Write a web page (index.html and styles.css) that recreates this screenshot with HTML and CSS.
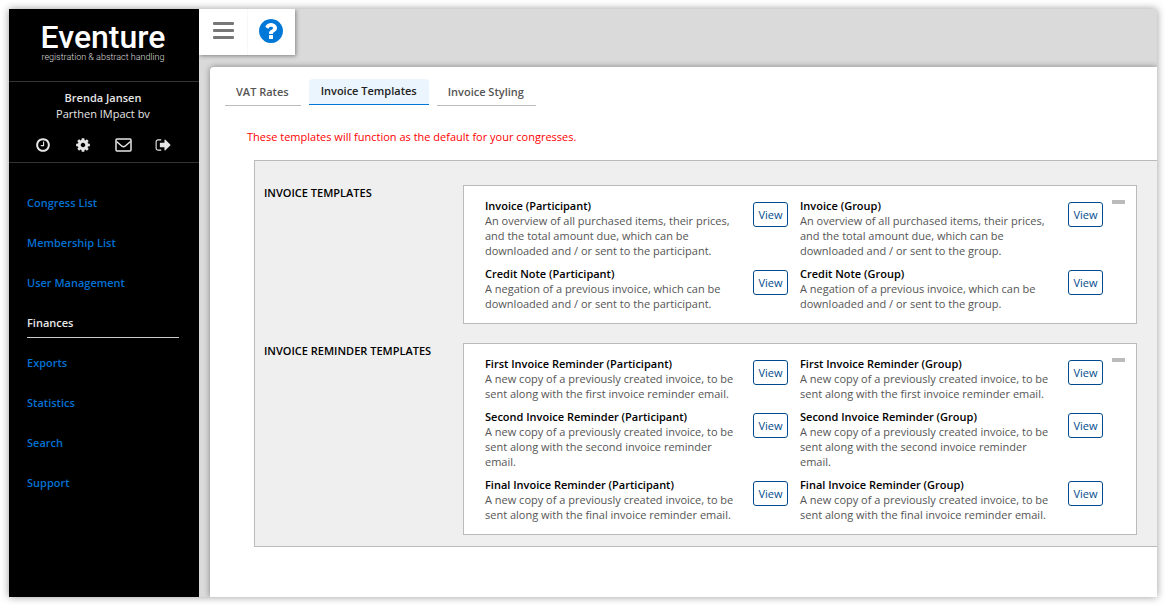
FILE: index.html
```
<!DOCTYPE html>
<html lang="en">

<head>
    <meta charset="UTF-8">
    <meta name="viewport" content="width=device-width, initial-scale=1.0">
    <title>Eventure - Invoice Templates</title>
    <link rel="stylesheet" href="styles.css">
</head>

<body>
    <div id="app">
        <aside id="sidebar">
            <div class="logo">
                <div class="logo-name">Eventure</div>
                <div class="logo-sub">registration &amp; abstract handling</div>
            </div>

            <div class="user">
                <div class="user-name">Brenda Jansen</div>
                <div>Parthen IMpact bv</div>
                <div class="user-icons">
                    <a href="#" aria-label="History">
                        <svg width="16" height="16" viewBox="0 0 1792 1792"><path d="M1024 544v448q0 14-9 23t-23 9h-320q-14 0-23-9t-9-23v-64q0-14 9-23t23-9h224v-352q0-14 9-23t23-9h64q14 0 23 9t9 23zm416 352q0-148-73-273t-198-198-273-73-273 73-198 198-73 273 73 273 198 198 273 73 273-73 198-198 73-273zm224 0q0 209-103 385.5t-279.5 279.5-385.5 103-385.5-103-279.5-279.5-103-385.5 103-385.5 279.5-279.5 385.5-103 385.5 103 279.5 279.5 103 385.5z"/></svg>
                    </a>
                    <a href="#" aria-label="Settings">
                        <svg width="16" height="16" viewBox="0 0 1792 1792"><path d="M1152 896q0-106-75-181t-181-75-181 75-75 181 75 181 181 75 181-75 75-181zm512-109v222q0 12-8 23t-20 13l-185 28q-19 54-39 91 35 50 107 138 10 12 10 25t-9 23q-27 37-99 108t-94 71q-12 0-26-9l-138-108q-44 23-91 38-16 136-29 186-7 28-36 28h-222q-14 0-24.5-8.5t-11.5-21.5l-28-184q-49-16-90-37l-141 107q-10 9-25 9-14 0-25-11-126-114-165-168-7-10-7-23 0-12 8-23 15-21 51-66.5t54-70.5q-27-50-41-99l-183-27q-13-2-21-12.5t-8-23.5v-222q0-12 8-23t19-13l186-28q14-46 39-92-40-57-107-138-10-12-10-24 0-10 9-23 26-36 98.5-107.5t94.5-71.5q13 0 26 10l138 107q44-23 91-38 16-136 29-186 7-28 36-28h222q14 0 24.5 8.5t11.5 21.5l28 184q49 16 90 37l142-107q9-9 24-9 13 0 25 10 129 119 165 170 7 8 7 22 0 12-8 23-15 21-51 66.5t-54 70.5q26 50 41 98l183 28q13 2 21 12.5t8 23.5z"/></svg>
                    </a>
                    <a href="#" aria-label="Messages">
                        <svg class="line" width="17" height="14" viewBox="0 0 17 14"><rect x="1" y="1" width="15" height="12" rx="1"/><path d="M1.5 3.5L7 8.2Q8.5 9.4 10 8.2L15.500 3.500"/></svg>
                    </a>
                    <a href="#" aria-label="Log out">
                        <svg width="16" height="16" viewBox="0 0 1792 1792"><path d="M704 1440q0 4 1 20t.5 26.5-3 23.5-10 19.5-20.5 6.500h-320q-119 0-203.500-84.500t-84.500-203.500v-704q0-119 84.500-203.500t203.500-84.500h320q13 0 22.500 9.500t9.500 22.500q0 4 1 20t.5 26.500-3 23.500-10 19.500-20.500 6.500h-320q-66 0-113 47t-47 113v704q0 66 47 113t113 47h312l11.500 1 11.500 3 8 5.500 7 9 2 13.500zm1024-544q0 26-19 45l-544 544q-19 19-45 19t-45-19-19-45v-288h-448q-26 0-45-19t-19-45v-384q0-26 19-45t45-19h448v-288q0-26 19-45t45-19 45 19l544 544q19 19 19 45z"/></svg>
                    </a>
                </div>
            </div>

            <nav>
                <a href="#">Congress List</a>
                <a href="#">Membership List</a>
                <a href="#">User Management</a>
                <a href="#" class="current">Finances</a>
                <a href="#">Exports</a>
                <a href="#">Statistics</a>
                <a href="#">Search</a>
                <a href="#">Support</a>
            </nav>
        </aside>

        <div id="main">
            <div id="toolbar">
                <button type="button" aria-label="Menu">
                    <svg width="21" height="18" viewBox="0 0 21 18" fill="#777"><rect width="21" height="3" rx="1"/><rect y="7" width="21" height="3" rx="1"/><rect y="14" width="21" height="3" rx="1"/></svg>
                </button>
                <button type="button" aria-label="Help">
                    <svg width="28" height="28" viewBox="0 0 1792 1792" fill="#0078d7"><path d="M1024 1376v-192q0-14-9-23t-23-9h-192q-14 0-23 9t-9 23v192q0 14 9 23t23 9h192q14 0 23-9t9-23zm256-672q0-88-55.500-163t-138.500-116-170-41q-243 0-371 213-15 24 8 42l132 100q7 6 19 6 16 0 25-12 53-68 86-92 34-24 86-24 48 0 85.500 26t37.500 59q0 38-20 61t-68 45q-63 28-115.500 86.500t-52.500 125.500v36q0 14 9 23t23 9h192q14 0 23-9t9-23q0-19 21.500-49.500t54.500-49.500q32-18 49-28.500t46-35 44.500-48 28-60.500 12.500-81zm384 192q0 209-103 385.500t-279.500 279.500-385.500 103-385.500-103-279.500-279.500-103-385.500 103-385.500 279.500-279.500 385.500-103 385.500 103 279.500 279.500 103 385.500z"/></svg>
                </button>
            </div>

            <main id="panel">
                <div class="tabs">
                    <a href="#">VAT Rates</a>
                    <a href="#" class="active">Invoice Templates</a>
                    <a href="#">Invoice Styling</a>
                </div>

                <p class="notice">These templates will function as the default for your congresses.</p>

                <div id="templates">
                    <section>
                        <h2>INVOICE TEMPLATES</h2>
                        <div class="box">
                            <div class="items">
                                <div class="item">
                                    <div>
                                        <h3>Invoice (Participant)</h3>
                                        <p>An overview of all purchased items, their prices, and the total amount due, which can be downloaded and / or sent to the participant.</p>
                                    </div>
                                    <button type="button">View</button>
                                </div>
                                <div class="item">
                                    <div>
                                        <h3>Invoice (Group)</h3>
                                        <p>An overview of all purchased items, their prices, and the total amount due, which can be downloaded and / or sent to the group.</p>
                                    </div>
                                    <button type="button">View</button>
                                </div>
                                <div class="item">
                                    <div>
                                        <h3>Credit Note (Participant)</h3>
                                        <p>A negation of a previous invoice, which can be downloaded and / or sent to the participant.</p>
                                    </div>
                                    <button type="button">View</button>
                                </div>
                                <div class="item">
                                    <div>
                                        <h3>Credit Note (Group)</h3>
                                        <p>A negation of a previous invoice, which can be downloaded and / or sent to the group.</p>
                                    </div>
                                    <button type="button">View</button>
                                </div>
                            </div>
                            <button type="button" class="collapse" aria-label="Collapse"></button>
                        </div>
                    </section>

                    <section>
                        <h2>INVOICE REMINDER TEMPLATES</h2>
                        <div class="box">
                            <div class="items">
                                <div class="item">
                                    <div>
                                        <h3>First Invoice Reminder (Participant)</h3>
                                        <p>A new copy of a previously created invoice, to be sent along with the first invoice reminder email.</p>
                                    </div>
                                    <button type="button">View</button>
                                </div>
                                <div class="item">
                                    <div>
                                        <h3>First Invoice Reminder (Group)</h3>
                                        <p>A new copy of a previously created invoice, to be sent along with the first invoice reminder email.</p>
                                    </div>
                                    <button type="button">View</button>
                                </div>
                                <div class="item">
                                    <div>
                                        <h3>Second Invoice Reminder (Participant)</h3>
                                        <p>A new copy of a previously created invoice, to be sent along with the second invoice reminder email.</p>
                                    </div>
                                    <button type="button">View</button>
                                </div>
                                <div class="item">
                                    <div>
                                        <h3>Second Invoice Reminder (Group)</h3>
                                        <p>A new copy of a previously created invoice, to be sent along with the second invoice reminder email.</p>
                                    </div>
                                    <button type="button">View</button>
                                </div>
                                <div class="item">
                                    <div>
                                        <h3>Final Invoice Reminder (Participant)</h3>
                                        <p>A new copy of a previously created invoice, to be sent along with the final invoice reminder email.</p>
                                    </div>
                                    <button type="button">View</button>
                                </div>
                                <div class="item">
                                    <div>
                                        <h3>Final Invoice Reminder (Group)</h3>
                                        <p>A new copy of a previously created invoice, to be sent along with the final invoice reminder email.</p>
                                    </div>
                                    <button type="button">View</button>
                                </div>
                            </div>
                            <button type="button" class="collapse" aria-label="Collapse"></button>
                        </div>
                    </section>
                </div>
            </main>
        </div>
    </div>
</body>

</html>
```
FILE: styles.css
```
* {
    box-sizing: border-box;
}

body {
    display: flex;
    min-height: 100vh;
    margin: 0;
    padding: 9px 8px 8px 9px;
    background: #fff;
    color: #555;
    font-family: "Open Sans", sans-serif;
    font-size: 11px;
    line-height: 15px;
}

a {
    color: inherit;
    text-decoration: none;
}

h2, h3, p {
    margin: 0;
    font-size: 11px;
}

h2, h3 {
    color: #000;
    font-weight: 600;
}

button {
    padding: 0;
    border: none;
    background: none;
    font-family: inherit;
    font-size: 11px;
    cursor: pointer;
}

svg {
    display: block;
}

#app {
    display: flex;
    flex: 1;
    background: #dadada;
    box-shadow: 0 0 8px rgba(0, 0, 0, 0.4);
}

/* sidebar */
#sidebar {
    flex: none;
    width: 190px;
    background: #000;
    color: #e6e6e6;
}

.logo {
    height: 73px;
    padding: 12px 2px 0 0;
    border-bottom: 1px solid #333;
    color: #fff;
    font-family: Roboto, sans-serif;
    text-align: center;
}

.logo-name {
    font-size: 32px;
    font-weight: 500;
    line-height: 32px;
}

.logo-sub {
    color: #ddd;
    font-size: 9px;
    font-weight: 300;
    line-height: 9px;
    white-space: nowrap;
}

.user {
    height: 81px;
    padding: 8px 2px 0 0;
    border-bottom: 1px solid #333;
    line-height: 16px;
    text-align: center;
}

.user-name {
    font-weight: 600;
}

.user-icons {
    display: flex;
    justify-content: center;
    margin-top: 15px;
}

.user-icons a {
    display: flex;
    align-items: center;
    justify-content: center;
    width: 40px;
    height: 16px;
}

.user-icons svg {
    fill: #e6e6e6;
}

.user-icons .line {
    fill: none;
    stroke: #e6e6e6;
    stroke-width: 1.5;
}

nav {
    padding: 25px 20px 0 18px;
}

nav a {
    display: block;
    height: 30px;
    margin-bottom: 10px;
    padding-top: 7px;
    border-bottom: 1px solid transparent;
    color: #0070d2;
    font-weight: 600;
}

nav .current {
    border-color: #ccc;
    color: #e6e6e6;
}

/* content */
#main {
    display: flex;
    flex: 1;
    flex-direction: column;
    min-width: 0;
    overflow: hidden;
}

#toolbar {
    display: flex;
    align-self: flex-start;
    margin-bottom: 12px;
    background: #fff;
    box-shadow: 1px 1px 4px rgba(0, 0, 0, 0.4);
}

#toolbar button {
    display: flex;
    align-items: center;
    justify-content: center;
    width: 48px;
    height: 46px;
    padding-bottom: 2px;
}

#toolbar button + button {
    padding-right: 2px;
    border-left: 1px solid #f7f7f7;
}

#panel {
    flex: 1;
    margin-left: 11px;
    padding: 12px 0 20px 15px;
    border-top-left-radius: 4px;
    background: #fff;
    box-shadow: 0 0 6px rgba(0, 0, 0, 0.4);
}

.tabs {
    display: flex;
    gap: 8px;
    font-weight: 600;
}

.tabs a {
    height: 27px;
    padding: 5px 12px 0 11px;
    border-bottom: 1px solid #bbb;
}

.tabs .active {
    height: 26px;
    padding: 4px 12px 0;
    border-color: #0078d7;
    border-radius: 4px 4px 0 0;
    background: #ebf5fd;
    color: #222;
}

.notice {
    margin: 23px 0 16px 22px;
    color: #f00;
}

#templates {
    margin-left: 29px;
    padding: 24px 20px 11px 9px;
    border: 1px solid #bbb;
    border-right: none;
    background: #efefef;
}

section {
    display: flex;
}

section + section {
    margin-top: 19px;
}

section h2 {
    flex: none;
    width: 199px;
    font-weight: 600;
}

.box {
    display: flex;
    flex: 1;
    align-items: flex-start;
    padding: 12px 11px 12px 21px;
    border: 1px solid #bbb;
    background: #fff;
}

.items {
    display: grid;
    flex: 1;
    grid-template-columns: 1fr 1fr;
    gap: 8px 12px;
}

.item {
    display: flex;
    align-items: flex-start;
    gap: 15px;
}

.item div {
    flex: 1;
}

.item button {
    flex: none;
    width: 35px;
    height: 25px;
    margin-top: 4px;
    border: 1px solid #004b8d;
    border-radius: 3px;
    background: #fff;
    color: #004b8d;
}

.collapse {
    width: 13px;
    height: 4px;
    margin: 2px 0 0 9px;
    background: #bbb;
}
```
